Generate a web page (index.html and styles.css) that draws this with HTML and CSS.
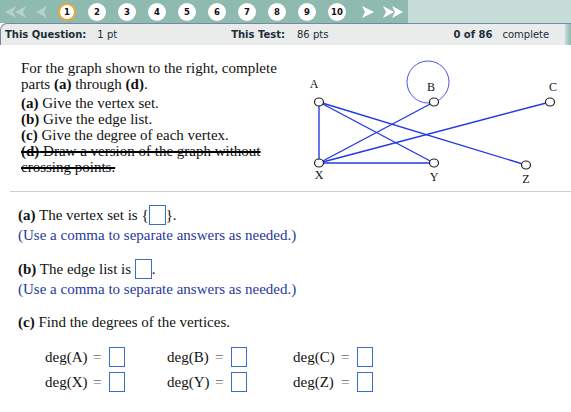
FILE: index.html
```html
<!DOCTYPE html>
<html>
<head>
<meta charset="utf-8">
<link rel="stylesheet" href="styles.css">
</head>
<body>
<div class="nav">
  <svg class="arr dbl" width="22" height="12" viewBox="0 0 22 12"><polygon points="11,0 0,6 11,12 8,6" fill="#b4d2c9"/><polygon points="21,0 10,6 21,12 18,6" fill="#b4d2c9"/></svg>
  <svg class="arr sgl-l" width="11" height="12" viewBox="0 0 11 12"><polygon points="11,0 0,6 11,12 8,6" fill="#b4d2c9"/></svg>
  <div class="nums">
    <span class="num cur">1</span><span class="num">2</span><span class="num">3</span><span class="num">4</span><span class="num">5</span><span class="num">6</span><span class="num">7</span><span class="num">8</span><span class="num">9</span><span class="num">10</span>
  </div>
  <svg class="arr sgl-r" width="12" height="12" viewBox="0 0 12 12"><polygon points="0,0 12,6 0,12 3,6" fill="#ffffff"/></svg>
  <svg class="arr dbl-r" width="21" height="12" viewBox="0 0 21 12"><polygon points="0,0 11,6 0,12 3,6" fill="#ffffff"/><polygon points="9,0 20,6 9,12 12,6" fill="#ffffff"/></svg>
</div>
<div class="head">
  <b class="h-q">This Question:</b><span class="h-qv">1 pt</span>
  <b class="h-t">This Test:</b><span class="h-tv">86 pts</span>
  <b class="h-c">0 of 86</b><span class="h-cv">complete</span>
  <span class="h-edge"></span>
</div>
<div class="main">
  <div class="prompt">
    <p class="intro">For the graph shown to the right, complete<br>parts <b>(a)</b> through <b>(d)</b>.</p>
    <p class="list"><b>(a)</b> Give the vertex set.<br><b>(b)</b> Give the edge list.<br><b>(c)</b> Give the degree of each vertex.<br><span class="strike"><b>(d)</b> Draw a version of the graph without<br>crossing points.</span></p>
  </div>
  <svg class="graph" width="271" height="135" viewBox="0 0 271 135">
    <circle cx="128" cy="27" r="21" fill="none" stroke="#4a55ee" stroke-width="1"/>
    <g stroke="#2438e6" stroke-width="1.4">
      <line x1="19" y1="47" x2="19" y2="108"/>
      <line x1="19" y1="47" x2="134" y2="108"/>
      <line x1="19" y1="47" x2="226" y2="110"/>
      <line x1="134" y1="47" x2="19" y2="108"/>
      <line x1="250" y1="47" x2="19" y2="108"/>
      <line x1="19" y1="108" x2="134" y2="108"/>
    </g>
    <g fill="#fff" stroke="#222" stroke-width="1.2">
      <ellipse cx="19" cy="47" rx="4.5" ry="4"/>
      <ellipse cx="134" cy="47" rx="4.5" ry="4"/>
      <ellipse cx="250" cy="47" rx="4.5" ry="4"/>
      <ellipse cx="19" cy="108" rx="4.5" ry="4"/>
      <ellipse cx="134" cy="108" rx="4.5" ry="4"/>
      <ellipse cx="226" cy="110" rx="4.5" ry="4"/>
    </g>
    <g class="lbl">
      <text x="14" y="33" text-anchor="middle">A</text>
      <text x="131" y="36" text-anchor="middle">B</text>
      <text x="253" y="36" text-anchor="middle">C</text>
      <text x="19" y="124" text-anchor="middle">X</text>
      <text x="134" y="126" text-anchor="middle">Y</text>
      <text x="226" y="128" text-anchor="middle">Z</text>
    </g>
  </svg>
</div>
<div class="sep"></div>
<div class="answers">
  <div class="line"><b>(a)</b> The vertex set is {<span class="box"></span>}.</div>
  <div class="line hint">(Use a comma to separate answers as needed.)</div>
  <div class="line gap"><b>(b)</b> The edge list is <span class="box"></span>.</div>
  <div class="line hint">(Use a comma to separate answers as needed.)</div>
  <div class="line gap c"><b>(c)</b> Find the degrees of the vertices.</div>
  <div class="degs">
    <div class="deg"><span class="dl">deg(A)</span><span class="eq">=</span><span class="box"></span></div>
    <div class="deg"><span class="dl">deg(B)</span><span class="eq">=</span><span class="box"></span></div>
    <div class="deg"><span class="dl">deg(C)</span><span class="eq">=</span><span class="box"></span></div>
    <div class="deg"><span class="dl">deg(X)</span><span class="eq">=</span><span class="box"></span></div>
    <div class="deg"><span class="dl">deg(Y)</span><span class="eq">=</span><span class="box"></span></div>
    <div class="deg"><span class="dl">deg(Z)</span><span class="eq">=</span><span class="box"></span></div>
  </div>
</div>
</body>
</html>
```
FILE: styles.css
```css
* { box-sizing: border-box; }
html, body { margin: 0; padding: 0; background: #fff; }
body { width: 571px; height: 412px; overflow: hidden; font-family: "Liberation Serif", "Times New Roman", serif; color: #111; }

.nav {
  height: 23px;
  display: flex;
  align-items: center;
  background: linear-gradient(to right, #8fbaaf 0, #8fbaaf 408px, #c5dcd7 408px);
}
.arr { display: block; flex: none; }
.dbl { margin-left: 5px; }
.sgl-l { margin-left: 9px; }
.nums { display: flex; gap: 12px; margin-left: 11px; }
.num {
  width: 18px; height: 18px; border-radius: 50%;
  background: #fff;
  display: flex; align-items: center; justify-content: center;
  font-family: "DejaVu Sans", Verdana, sans-serif; font-weight: bold; font-size: 8.5px; color: #111;
}
.num.cur { border: 2px solid #f2a531; }
.sgl-r { margin-left: 16px; }
.dbl-r { margin-left: 9px; }

.head {
  height: 22px;
  display: flex;
  align-items: center;
  background: #e9ecea;
  border-top: 1px solid #7388a6;
  border-left: 1px solid #7388a6;
  border-top-left-radius: 7px;
  font-family: "DejaVu Sans", Verdana, sans-serif;
  font-size: 10px;
  color: #1c2b3a;
}
.head b { font-weight: bold; color: #1c2e3c; }
.h-q { margin-left: 4px; }
.h-qv { margin-left: 11px; }
.h-t { margin-left: 114px; }
.h-tv { margin-left: 12px; }
.h-c { margin-left: 125px; }
.h-cv { margin-left: 10px; }
.h-edge { margin-left: auto; width: 6px; align-self: stretch; background: linear-gradient(to right, #c5dcd7, #8fbaaf); }

.main { display: flex; padding-top: 10px; height: 145px; }
.prompt { width: 289px; padding-left: 21px; padding-top: 5px; font-size: 15px; line-height: 16px; }
.prompt p { margin: 0; }
.prompt .list { margin-top: 3px; }
.strike { text-decoration: line-through; text-decoration-thickness: 2px; text-decoration-color: #000; }
.graph { display: block; flex: none; margin-left: 11px; }
.lbl text { font-family: "Liberation Serif", "Times New Roman", serif; font-size: 12px; fill: #111; }

.sep { height: 1px; margin-left: 10px; margin-top: 1px; background: #cfcfcf; }

.answers { padding-left: 18px; padding-top: 13px; font-size: 15px; }
.line { height: 20px; line-height: 20px; display: flex; align-items: center; white-space: pre; }
.line.gap { margin-top: 14px; }
.line.c { margin-top: 13px; }
.hint { color: #27389c; }
.box { display: inline-block; width: 17px; height: 20px; border: 1px solid #3a6cd0; background: #fff; }
.degs { display: grid; grid-template-columns: 122px 126px 126px; row-gap: 5px; margin-top: 15px; padding-left: 27px; }
.deg { display: flex; align-items: center; height: 20px; }
.dl { width: 48px; }
.eq { color: #666; width: 16px; text-align: left; }
.deg .box { width: 16px; }
```
